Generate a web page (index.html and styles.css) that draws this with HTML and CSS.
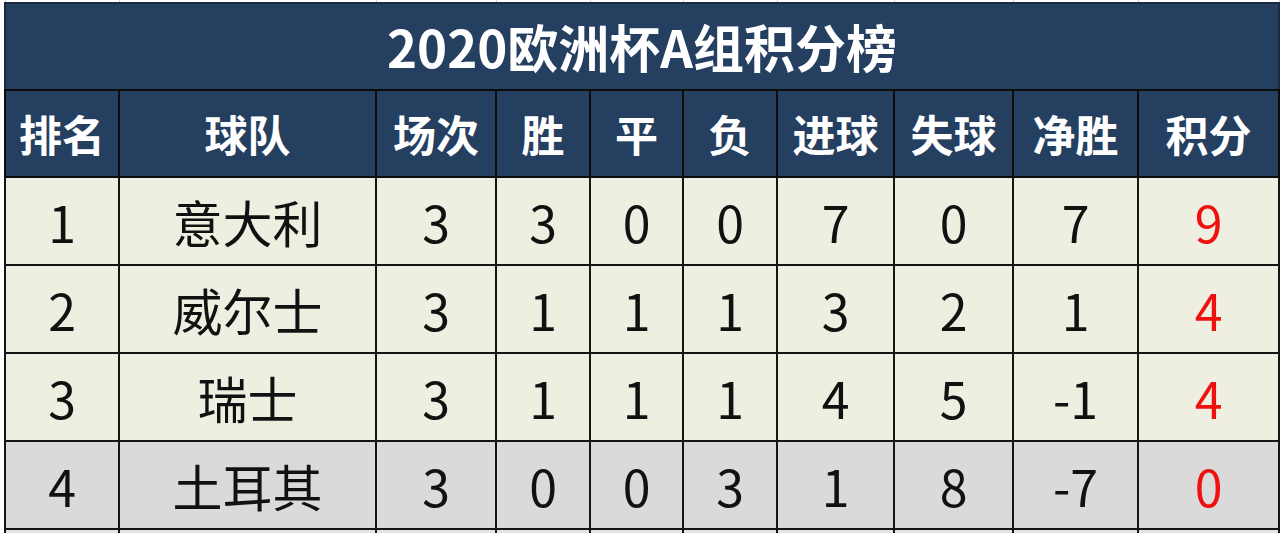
FILE: index.html
```html
<!DOCTYPE html>
<html lang="zh-CN">
<head>
<meta charset="utf-8">
<title>2020欧洲杯A组积分榜</title>
<link rel="stylesheet" href="styles.css">
</head>
<body>
<div class="sheet">
  <table class="standings">
    <colgroup>
      <col class="c-rank"><col class="c-team"><col class="c-p"><col class="c-w"><col class="c-d"><col class="c-l"><col class="c-gf"><col class="c-ga"><col class="c-gd"><col class="c-pts">
    </colgroup>
    <tr class="ghost">
      <td></td><td></td><td></td><td></td><td></td><td></td><td></td><td></td><td></td><td></td>
    </tr>
    <tr class="title">
      <th colspan="10">2020欧洲杯A组积分榜</th>
    </tr>
    <tr class="head">
      <th>排名</th><th>球队</th><th>场次</th><th>胜</th><th>平</th><th>负</th><th>进球</th><th>失球</th><th>净胜</th><th>积分</th>
    </tr>
    <tr class="row">
      <td>1</td><td>意大利</td><td>3</td><td>3</td><td>0</td><td>0</td><td>7</td><td>0</td><td>7</td><td class="pts">9</td>
    </tr>
    <tr class="row">
      <td>2</td><td>威尔士</td><td>3</td><td>1</td><td>1</td><td>1</td><td>3</td><td>2</td><td>1</td><td class="pts">4</td>
    </tr>
    <tr class="row">
      <td>3</td><td>瑞士</td><td>3</td><td>1</td><td>1</td><td>1</td><td>4</td><td>5</td><td>-1</td><td class="pts">4</td>
    </tr>
    <tr class="row out">
      <td>4</td><td>土耳其</td><td>3</td><td>0</td><td>0</td><td>3</td><td>1</td><td>8</td><td>-7</td><td class="pts">0</td>
    </tr>
    <tr class="row tail">
      <td></td><td></td><td></td><td></td><td></td><td></td><td></td><td></td><td></td><td></td>
    </tr>
  </table>
</div>
</body>
</html>
```

FILE: styles.css
```css
html, body {
  margin: 0;
  padding: 0;
  background: #ffffff;
  overflow: hidden;
  height: 534px;
}

.sheet {
  padding: 0 2px 0 4px;
}

.standings {
  border-collapse: collapse;
  table-layout: fixed;
  width: 1274px;
  font-family: "Noto Sans CJK SC", "Microsoft YaHei", sans-serif;
}

.c-rank { width: 114px; }
.c-team { width: 257px; }
.c-p { width: 120px; }
.c-w { width: 94px; }
.c-d { width: 93px; }
.c-l { width: 94px; }
.c-gf { width: 117px; }
.c-ga { width: 119px; }
.c-gd { width: 125px; }
.c-pts { width: 141px; }

.ghost td {
  height: 2px;
  padding: 0;
  border-left: 1px solid #d0d0d0;
  border-right: 1px solid #d0d0d0;
  background: #ffffff;
}

.title th {
  height: 85px;
  padding: 0;
  background: #243f60;
  color: #ffffff;
  font-size: 51px;
  font-weight: 700;
  line-height: 1;
  text-align: center;
  border: 2px solid #1b2a3c;
  border-bottom: 2px solid #0c0c0c;
}

.head th {
  height: 85px;
  padding: 0;
  background: #243f60;
  color: #ffffff;
  font-size: 43px;
  font-weight: 700;
  line-height: 1;
  text-align: center;
  border: 2px solid #0c0c0c;
}

.row td {
  height: 86px;
  padding: 0;
  background: #efefe1;
  color: #111111;
  font-size: 50px;
  font-weight: 400;
  line-height: 1;
  text-align: center;
  border: 2px solid #151515;
}

.row.out td {
  background: #dadada;
}

.row.tail td {
  height: 3px;
  background: #e4e4e4;
  border-top: 2px solid #151515;
  border-bottom: none;
}

.row td.pts {
  color: #f01010;
}
```
